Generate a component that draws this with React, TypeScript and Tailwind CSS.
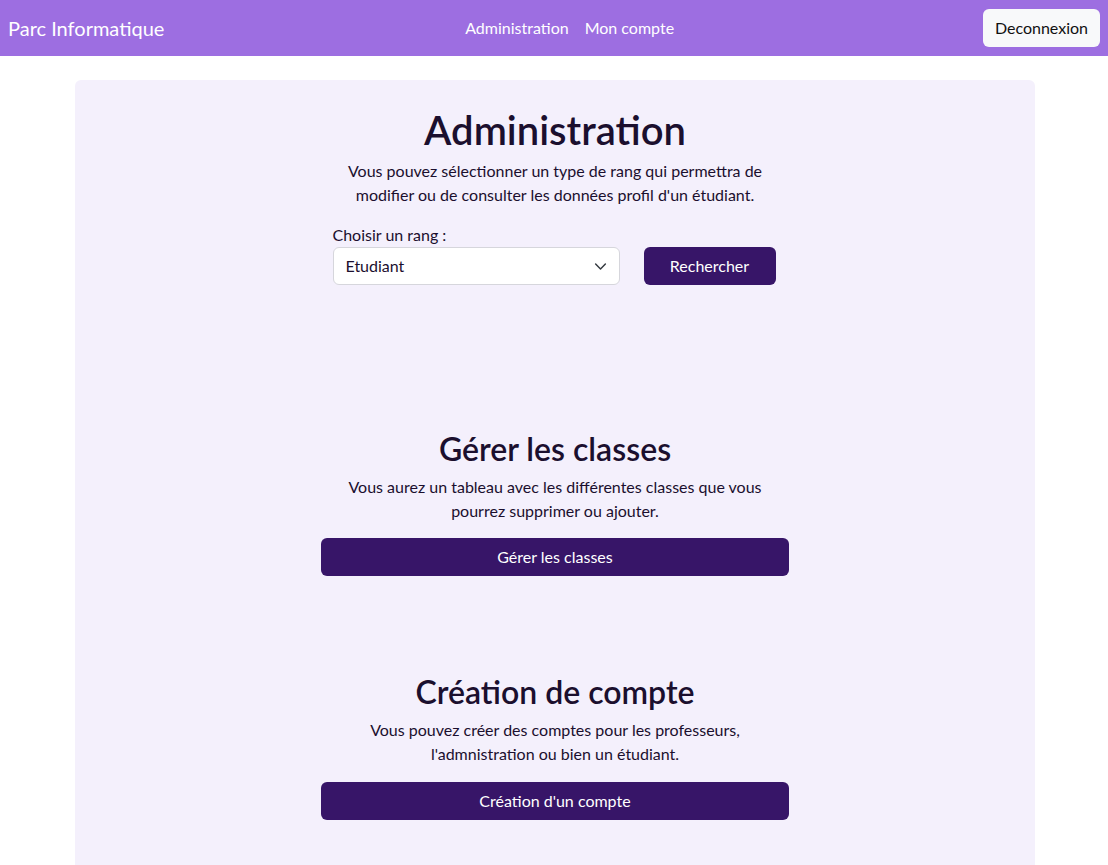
export default function App() {
  return (
    <div className="min-h-screen bg-white font-['Segoe_UI','Lato',sans-serif] text-[#1b0f2e]">
      <nav className="flex h-14 items-center bg-[#9d6ee1] px-2">
        <div className="text-[20px] text-white">Parc Informatique</div>
        <div className="flex flex-1 justify-center pr-2">
          <a className="px-2 text-[16px] text-white">Administration</a>
          <a className="px-2 text-[16px] text-white">Mon compte</a>
        </div>
        <button className="h-[38px] rounded-md bg-[#f8f9fa] px-3 text-[16px] text-[#111]">Deconnexion</button>
      </nav>

      <main className="mt-6 ml-[75px] w-[960px] rounded-md bg-[#f4f0fc] pt-[26px] pb-16">
        {/* Administration */}
        <section className="flex flex-col items-center">
          <h1 className="text-[40px] font-semibold leading-[48px]">Administration</h1>
          <p className="mt-[5px] w-[468px] text-center text-[16px] leading-6">
            Vous pouvez sélectionner un type de rang qui permettra de modifier ou de consulter les données profil d'un étudiant.
          </p>
          <div className="mt-4 flex items-end gap-6 pr-[2px]">
            <div className="flex flex-col">
              <label className="text-[16px] leading-6">Choisir un rang :</label>
              <div className="flex h-[38px] w-[287px] items-center justify-between rounded-md border border-[#d6d6dc] bg-white pl-3 pr-3">
                <span className="text-[16px]">Etudiant</span>
                <svg width="13" height="13" viewBox="0 0 16 16" fill="none" stroke="#343a40" strokeWidth="1.8" strokeLinecap="round" strokeLinejoin="round">
                  <path d="m2 5 6 6 6-6" />
                </svg>
              </div>
            </div>
            <button className="h-[38px] w-[132px] rounded-md bg-[#371568] text-[16px] text-white">Rechercher</button>
          </div>
        </section>

        {/* Gérer les classes */}
        <section className="mt-[145px] flex flex-col items-center">
          <h2 className="text-[32px] font-semibold leading-[38px]">Gérer les classes</h2>
          <p className="mt-[7px] w-[468px] text-center text-[16px] leading-6">
            Vous aurez un tableau avec les différentes classes que vous pourrez supprimer ou ajouter.
          </p>
          <button className="mt-[15px] h-[38px] w-[468px] rounded-md bg-[#371568] text-[16px] text-white">Gérer les classes</button>
        </section>

        {/* Création de compte */}
        <section className="mt-[97px] flex flex-col items-center">
          <h2 className="text-[32px] font-semibold leading-[38px]">Création de compte</h2>
          <p className="mt-[7px] w-[468px] text-center text-[16px] leading-6">
            Vous pouvez créer des comptes pour les professeurs, l'admnistration ou bien un étudiant.
          </p>
          <button className="mt-4 h-[38px] w-[468px] rounded-md bg-[#371568] text-[16px] text-white">Création d'un compte</button>
        </section>
      </main>
    </div>
  );
}
